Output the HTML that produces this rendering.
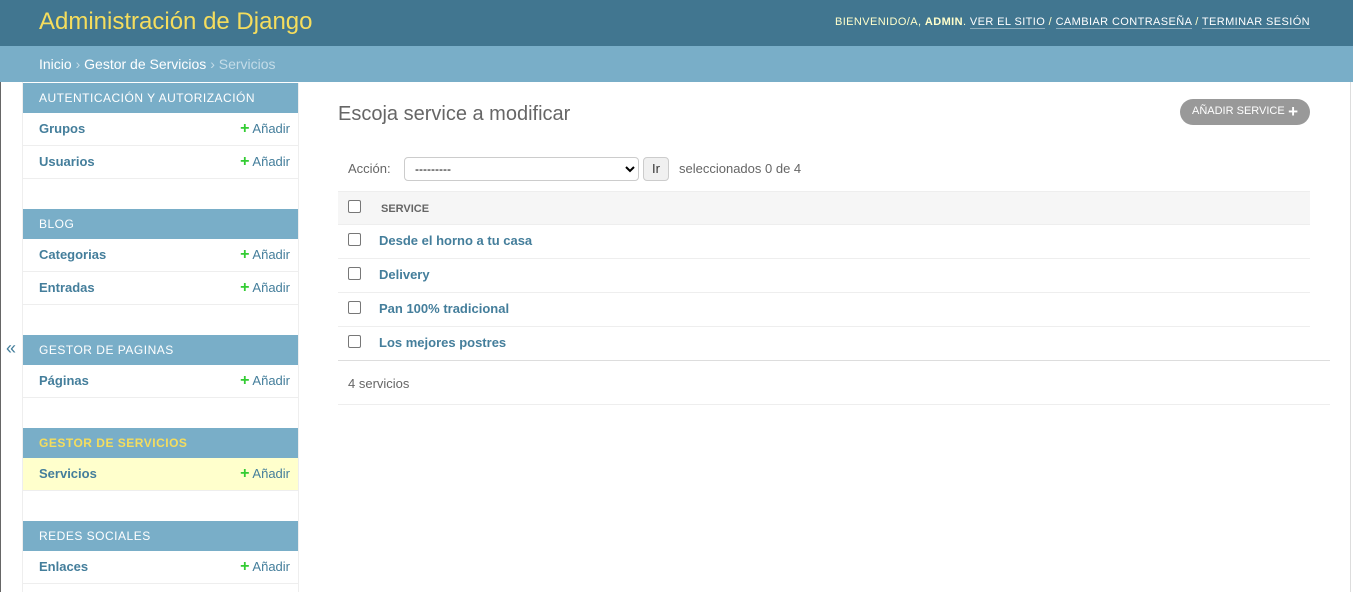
<!DOCTYPE html>
<html><head><meta charset="utf-8"><style>
*{box-sizing:border-box;margin:0;padding:0}
body{width:1353px;height:592px;overflow:hidden;background:#fff;font-family:"Liberation Sans",sans-serif;position:relative;color:#333}
#hdr{position:absolute;left:0;top:0;width:1353px;height:46px;background:#417690}
#brand{position:absolute;left:39px;top:8px;font-size:24px;color:#f5dd5d;font-weight:300}
#tools{position:absolute;right:43px;top:16px;font-size:11px;color:#ffc;letter-spacing:.4px}
#tools a{color:#fff;text-decoration:none;border-bottom:1px solid rgba(255,255,255,.4)}
#bc{position:absolute;left:0;top:46px;width:1353px;height:36px;background:#79aec8;color:#c4dce8;font-size:14px;padding:10px 39px}
#bc a{color:#fff}
#lline{position:absolute;left:0;top:82px;width:1px;height:510px;background:#666}
#rline{position:absolute;left:1350px;top:82px;width:3px;height:510px;background:#fff;border-left:1px solid #ddd}
#tog{position:absolute;left:1px;top:82px;width:22px;height:510px;border-right:1px solid #eee}
#tog span{position:absolute;left:5px;top:256px;color:#447e9b;font-size:18px}
#side{position:absolute;left:23px;top:83px;width:276px;border-right:1px solid #eee;height:509px}
.cap{height:30px;background:#79aec8;color:#fff;font-size:12px;letter-spacing:.5px;padding:8px 16px;text-transform:uppercase}
.cap.cur{color:#f5dd5d;font-weight:bold}
.row{height:33px;border-bottom:1px solid #eee;padding:8px 16px;font-size:13px;position:relative}
.row b{color:#447e9b}
.row .add{position:absolute;right:8px;top:8px;color:#447e9b}
.row .add i{font-style:normal;color:#3c3;font-weight:bold;font-size:16px;line-height:13px;margin-right:3px}
.row.sel{background:#ffc}
.gap{height:30px}
h1{position:absolute;left:338px;top:103px;font-size:20px;font-weight:normal;color:#666;white-space:nowrap}
#addbtn{position:absolute;left:1180px;top:99px;width:130px;height:26px;border-radius:13px;background:#999;color:#fff;font-size:11px;padding:6px 0 0 12px;letter-spacing:0;white-space:nowrap}
#addbtn b{position:absolute;right:12px;top:3px;font-size:17px}
#act{position:absolute;left:348px;top:161px;font-size:13px;color:#666}
select{position:absolute;left:404px;top:157px;width:235px;height:24px;border:1px solid #ccc;border-radius:4px;background:#fff;font-size:12px;font-family:"Liberation Sans",sans-serif;padding-left:6px}
#ir{position:absolute;left:643px;top:157px;width:26px;height:24px;border:1px solid #ccc;border-radius:4px;background:#f0f0f0;font-size:13px;text-align:center;line-height:22px}
#selc{position:absolute;left:679px;top:161px;font-size:13px;color:#666}
#tbl{position:absolute;left:338px;top:191px;width:972px}
.th{height:34px;background:#f6f6f6;border-top:1px solid #eee;border-bottom:1px solid #eee;font-size:11px;font-weight:bold;color:#666;padding:11px 0 0 43px;position:relative}
.tr{height:34px;border-bottom:1px solid #eee;font-size:13px;font-weight:bold;color:#447e9b;padding:8px 0 0 41px;position:relative}
.cb{position:absolute;left:10px;top:8px;width:13px;height:13px;border:1px solid #777;border-radius:2px;background:#fff}
#pag{position:absolute;left:338px;top:360px;width:992px;height:45px;border-top:1px solid #ddd;border-bottom:1px solid #eee;font-size:13px;color:#666;padding:15px 10px}
</style></head><body>
<div id="hdr"><div id="brand">Administración de Django</div>
<div id="tools">BIENVENIDO/A, <b>ADMIN</b>. <a>VER EL SITIO</a> / <a>CAMBIAR CONTRASEÑA</a> / <a>TERMINAR SESIÓN</a></div></div>
<div id="bc"><a>Inicio</a> › <a>Gestor de Servicios</a> › Servicios</div>
<div id="lline"></div><div id="rline"></div>
<div id="tog"><span>«</span></div>
<div id="side">
<div class="cap">Autenticación y autorización</div>
<div class="row"><b>Grupos</b><span class="add"><i>+</i>Añadir</span></div>
<div class="row"><b>Usuarios</b><span class="add"><i>+</i>Añadir</span></div>
<div class="gap"></div>
<div class="cap">Blog</div>
<div class="row"><b>Categorias</b><span class="add"><i>+</i>Añadir</span></div>
<div class="row"><b>Entradas</b><span class="add"><i>+</i>Añadir</span></div>
<div class="gap"></div>
<div class="cap">Gestor de Paginas</div>
<div class="row"><b>Páginas</b><span class="add"><i>+</i>Añadir</span></div>
<div class="gap"></div>
<div class="cap cur">Gestor de Servicios</div>
<div class="row sel"><b>Servicios</b><span class="add"><i>+</i>Añadir</span></div>
<div class="gap"></div>
<div class="cap">Redes Sociales</div>
<div class="row"><b>Enlaces</b><span class="add"><i>+</i>Añadir</span></div>
</div>
<h1>Escoja service a modificar</h1>
<div id="addbtn">AÑADIR SERVICE<b>+</b></div>
<div id="act">Acción:</div>
<select><option>---------</option></select>
<div id="ir">Ir</div>
<div id="selc">seleccionados 0 de 4</div>
<div id="tbl">
<div class="th"><span class="cb"></span>SERVICE</div>
<div class="tr"><span class="cb"></span>Desde el horno a tu casa</div>
<div class="tr"><span class="cb"></span>Delivery</div>
<div class="tr"><span class="cb"></span>Pan 100% tradicional</div>
<div class="tr"><span class="cb"></span>Los mejores postres</div>
</div>
<div id="pag">4 servicios</div>
</body></html>
